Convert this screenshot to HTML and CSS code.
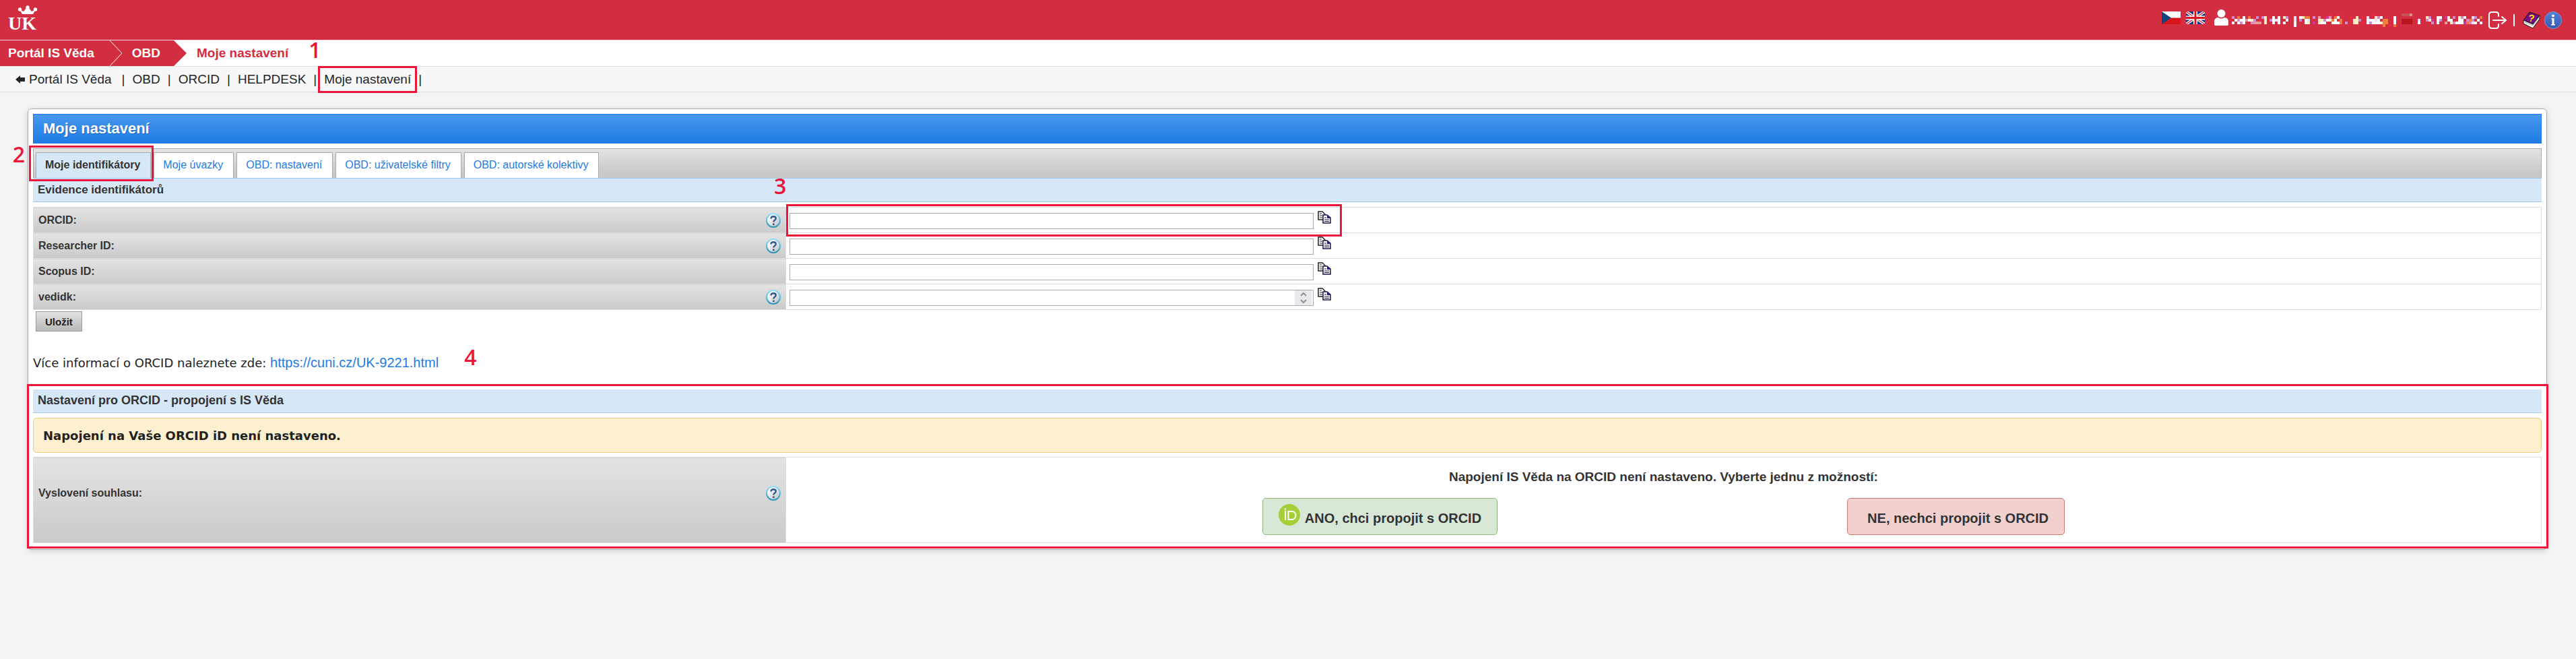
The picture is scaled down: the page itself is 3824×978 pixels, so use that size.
FILE: index.html
```
<!DOCTYPE html>
<html lang="cs">
<head>
    <meta charset="UTF-8">
    <meta name="viewport" content="width=device-width, initial-scale=1.0">
    <title>Moje nastavení - IS Věda</title>
    <link rel="stylesheet" href="styles.css">
</head>
<body>

    <!-- shared icons -->
    <svg class="sprite" width="0" height="0">
        <defs>
            <linearGradient id="helpFill" x1="0" y1="0" x2="1" y2="1">
                <stop offset="0.2" stop-color="#ffffff"/>
                <stop offset="1" stop-color="#b9bcc0"/>
            </linearGradient>
            <linearGradient id="helpRing" x1="0" y1="0" x2="0" y2="1">
                <stop offset="0" stop-color="#8fe0fa"/>
                <stop offset="1" stop-color="#2b94b8"/>
            </linearGradient>
            <linearGradient id="infoFill" x1="0" y1="0" x2="0" y2="1">
                <stop offset="0" stop-color="#5580d2"/>
                <stop offset="1" stop-color="#3458b4"/>
            </linearGradient>
        </defs>
        <symbol id="help" viewBox="0 0 22 22">
            <circle cx="11" cy="11" r="10" fill="url(#helpFill)" stroke="url(#helpRing)" stroke-width="2"/>
            <path d="M7.500 8.600c0-4.600 7.200-4.200 7.200-.4 0 2.400-3.400 2.500-3.400 5.300" fill="none" stroke="#34598c" stroke-width="2.400"/>
            <rect x="10" y="15.500" width="2.600" height="2.600" fill="#34598c"/>
        </symbol>
        <symbol id="copy" viewBox="0 0 20 19">
            <path d="M1 1h6l4 4v8H1z" fill="#fff" stroke="#222" stroke-width="1.500"/>
            <path d="M3 4h3M3 7h4M3 10h4" stroke="#222" stroke-width="1.200"/>
            <path d="M8 6h6l5 4v8H8z" fill="#fff" stroke="#1d1448" stroke-width="1.500"/>
            <path d="M14 6l5 5h-5z" fill="#2b1a78"/>
            <path d="M10 10h3M10 13h7M10 15.500h7" stroke="#1d1448" stroke-width="1.200"/>
        </symbol>
    </svg>

    <header class="topbar">
        <a href="#" class="logo" aria-label="Univerzita Karlova">
            <svg width="48" height="42" viewBox="0 0 48 42">
                <circle cx="17.500" cy="7" r="2.700" fill="#fff"/>
                <circle cx="40.500" cy="7" r="2.700" fill="#fff"/>
                <circle cx="29" cy="4" r="2.700" fill="#fff"/>
                <path d="M17 7l4 7h16l4-7-6 3-4-5h-4l-4 5z" fill="#fff"/>
                <text x="0" y="37" class="logo-text">UK</text>
            </svg>
        </a>
        <div class="user-tools">
            <a href="#" class="flag" aria-label="Čeština">
                <svg width="28" height="19" viewBox="0 0 28 19">
                    <path d="M0 0h28v10H0z" fill="#fff"/>
                    <path d="M0 9.500h28V19H0z" fill="#d7141a"/>
                    <path d="M0 0l14 9.500L0 19z" fill="#11457e"/>
                </svg>
            </a>
            <a href="#" class="flag" aria-label="English">
                <svg width="28" height="19" viewBox="0 0 28 19">
                    <path d="M0 0h28v19H0z" fill="#15318b"/>
                    <path d="M0 0l28 19M28 0L0 19" stroke="#fff" stroke-width="4"/>
                    <path d="M0 0l28 19M28 0L0 19" stroke="#d7141a" stroke-width="1.200"/>
                    <path d="M14 0v19M0 9.500h28" stroke="#fff" stroke-width="6"/>
                    <path d="M14 0v19M0 9.500h28" stroke="#d7141a" stroke-width="3"/>
                </svg>
            </a>
            <svg class="person" width="21" height="24" viewBox="0 0 21 24">
                <ellipse cx="10.500" cy="6" rx="6" ry="6" fill="#fff"/>
                <path d="M0 22v-4c0-4 3-6 6-6 3 2 6 2 9 0 3 0 6 2 6 6v4c0 1-1 2-2 2H2c-1 0-2-1-2-2z" fill="#fff"/>
            </svg>
            <!-- anonymised user name -->
            <svg class="user-name" width="372" height="28" viewBox="0 0 93 7" shape-rendering="crispEdges">
                <path stroke="#fff" d="M4 2.500h1M15 2.500h1M17 2.500h1M25 2.500h1M55 2.500h1M60 2.500h1M76 2.500h2M39 2.500h1M86 2.500h1M1 3.500h1M3 3.500h2M6 3.500h2M15 3.500h1M17 3.500h1M20 3.500h1M27 3.500h1M35 3.500h1M38 3.500h1M50 3.500h3M54 3.500h1M60 3.500h1M76 3.500h1M80 3.500h2M84 3.500h2M91 3.500h1M0 4.500h1M2 4.500h1M4 4.500h1M15 4.500h1M17 4.500h1M19 4.500h1M23 4.500h1M27 4.500h1M33 4.500h2M37 4.500h3M50 4.500h1M52 4.500h3M60 4.500h1M69 4.500h1M76 4.500h1M83 4.500h3M90 4.500h1M92 4.500h1M23 5.500h1"/>
                <path stroke="#fdecc3" d="M12 2.500h1M19 2.500h1M26 2.500h1M46 2.500h1M53 2.500h1M72 2.500h1M80 2.500h1M84 2.500h1M7 3.500h1M12 3.500h1M32 3.500h2M36 3.500h1M45 3.500h2M73 3.500h1M12 4.500h1M28 4.500h1M32 4.500h1M45 4.500h2M55 4.500h1M81 4.500h1"/>
                <path stroke="#d08bd0" d="M0 2.500h1M9 2.500h1M11 2.500h1M30 2.500h1M20 2.500h1M54 2.500h1M73 2.500h1M82 2.500h1M85 2.500h1M90 2.500h1M2 3.500h1M8 3.500h1M14 3.500h1M25 3.500h1M34 3.500h1M47 3.500h1M72 3.500h1M77 3.500h1M87 3.500h1M89 3.500h1M3 4.500h1M7 4.500h1M42 4.500h1M51 4.500h1M74 4.500h1M82 4.500h1M88 4.500h1"/>
                <path stroke="#eee0fa" d="M23 2.500h1M50 2.500h1M89 2.500h1M16 3.500h1M23 3.500h1M28 3.500h1M53 3.500h1M69 3.500h1M89 4.500h1"/>
                <path stroke="#f27e3e" d="M2 2.500h1M6 2.500h1M28 2.500h1M27 2.500h1M38 2.500h1M92 2.500h1M37 3.500h1M40 3.500h1M56 3.500h2M88 3.500h1M40 4.500h1M56 4.500h2M87 4.500h1M56 5.500h1M60 5.500h1"/>
                <path stroke="#cf35a0" d="M30 4.500h1M35 2.500h1M74 3.500h1M79 2.500h1M86 4.500h1"/>
                <path stroke="#ea9aa0" d="M8 4.500h3M32 2.500h1M36 2.500h1M79 4.500h1M5 3.500h1"/>
                <path stroke="#e62a42" d="M36 1.500h1M39 1.500h1M44 2.500h1M44 3.500h1M44 4.500h1M48 2.500h1M48 4.500h1M52 1.500h1M55 5.500h1M58 5.500h1"/>
                <path stroke="#b8141e" d="M63 3.500h4M63 4.500h4"/>
                <path stroke="#c65550" d="M63 1.500h3"/>
                <path stroke="#e28a88" d="M66 1.500h1"/>
            </svg>
            <a href="#" class="logout" aria-label="Odhlásit">
                <svg width="27" height="26" viewBox="0 0 27 26" fill="none" stroke="#fff" stroke-width="2" stroke-linecap="round" stroke-linejoin="round">
                    <path d="M15 7V5c0-3-1-4-4-4H5C2 1 1 2 1 5v16c0 3 1 4 4 4h6c3 0 4-1 4-4v-2"/>
                    <path d="M7 13h18M20 8l6 5-6 5"/>
                </svg>
            </a>
            <span class="tool-sep"></span>
            <a href="#" class="manual" aria-label="Nápověda">
                <svg width="26" height="26" viewBox="0 0 26 26">
                    <path d="M10 1l15 5-10 13L1 13z" fill="#7a0a86" stroke="#111" stroke-width="1"/>
                    <path d="M1 13l14 6 10-13v5L15 25 1 18z" fill="#fff" stroke="#111" stroke-width="1"/>
                    <path d="M3 16l12 5 9-12" fill="none" stroke="#999" stroke-width="1"/>
                    <path d="M10 7.500c2-3 7-2 6 1-1 2-3 1-3.500 3.500" fill="none" stroke="#ffe600" stroke-width="2"/>
                    <path d="M11 13h2v2h-2z" fill="#ffe600"/>
                </svg>
            </a>
            <a href="#" class="info" aria-label="Informace">
                <svg width="26" height="26" viewBox="0 0 26 26">
                    <circle cx="13" cy="13" r="12.500" fill="url(#infoFill)" stroke="#7797d8"/>
                    <circle cx="13" cy="6.500" r="2" fill="#fff"/>
                    <path d="M10.500 10h4v9h1.500v1.500h-6V19h1.500v-7.500h-1z" fill="#fff"/>
                </svg>
            </a>
        </div>
    </header>

    <nav class="breadcrumb" aria-label="Drobečková navigace">
        <a href="#" class="crumb">Portál IS Věda</a>
        <svg class="crumb-chevron" width="20" height="38" viewBox="0 0 20 38">
            <path d="M1 0l18 19L1 38" fill="none" stroke="#fff"/>
        </svg>
        <a href="#" class="crumb crumb-last">OBD</a>
        <svg class="crumb-end" width="20" height="38" viewBox="0 0 20 38">
            <path d="M0 0l19 19L0 38z" fill="#d22d40"/>
        </svg>
        <span class="crumb-current">Moje nastavení<span class="step step-1">1</span></span>
    </nav>

    <nav class="menu">
        <a href="#" class="menu-back">
            <svg width="14" height="12" viewBox="0 0 14 12"><path d="M0 6l7-6v3h7v6H7v3z" fill="#212529"/></svg>
            Portál IS Věda</a>
        <span class="menu-sep first">|</span>
        <a href="#">OBD</a>
        <span class="menu-sep">|</span>
        <a href="#">ORCID</a>
        <span class="menu-sep">|</span>
        <a href="#">HELPDESK</a>
        <span class="menu-sep">|</span>
        <a href="#" class="marked">Moje nastavení</a>
        <span class="menu-sep">|</span>
    </nav>

    <main class="panel">
        <h1>Moje nastavení</h1>

        <div class="tabs">
            <a href="#" class="tab active">Moje identifikátory<span class="step step-2">2</span></a>
            <a href="#" class="tab">Moje úvazky</a>
            <a href="#" class="tab">OBD: nastavení</a>
            <a href="#" class="tab">OBD: uživatelské filtry</a>
            <a href="#" class="tab">OBD: autorské kolektivy</a>
        </div>

        <form>
            <h2 class="section-title tabs-title">Evidence identifikátorů</h2>
            <table class="form-table">
                <tr>
                    <th scope="row"><div class="label-cell"><label for="orcid">ORCID:</label><svg width="22" height="22"><use href="#help"/></svg></div></th>
                    <td class="marked-cell">
                        <div class="field"><input type="text" id="orcid"><svg width="20" height="19"><use href="#copy"/></svg></div>
                        <span class="field-mark"><span class="step step-3">3</span></span>
                    </td>
                </tr>
                <tr>
                    <th scope="row"><div class="label-cell"><label for="researcher">Researcher ID:</label><svg width="22" height="22"><use href="#help"/></svg></div></th>
                    <td><div class="field"><input type="text" id="researcher"><svg width="20" height="19"><use href="#copy"/></svg></div></td>
                </tr>
                <tr>
                    <th scope="row"><div class="label-cell"><label for="scopus">Scopus ID:</label></div></th>
                    <td><div class="field"><input type="text" id="scopus"><svg width="20" height="19"><use href="#copy"/></svg></div></td>
                </tr>
                <tr>
                    <th scope="row"><div class="label-cell"><label for="vedidk">vedidk:</label><svg width="22" height="22"><use href="#help"/></svg></div></th>
                    <td>
                        <div class="field">
                            <div class="number-field">
                                <input type="number" id="vedidk">
                                <svg class="spinner" width="25" height="22" viewBox="0 0 25 22" fill="none" stroke="#8f8f9d" stroke-width="2">
                                    <path d="M9 8l4-4 4 4M9 14l4 4 4-4"/>
                                </svg>
                            </div>
                            <svg width="20" height="19"><use href="#copy"/></svg>
                        </div>
                    </td>
                </tr>
            </table>
            <button type="submit" class="btn-save">Uložit</button>
        </form>

        <p class="more-info">Více informací o ORCID naleznete zde: <a href="https://cuni.cz/UK-9221.html">https://cuni.cz/UK-9221.html</a><span class="step step-4">4</span></p>

        <section class="orcid-section">
            <h2 class="section-title">Nastavení pro ORCID - propojení s IS Věda</h2>
            <div class="warning">Napojení na Vaše ORCID iD není nastaveno.</div>
            <table class="form-table consent-table">
                <tr>
                    <th scope="row"><div class="label-cell">Vyslovení souhlasu:<svg width="22" height="22"><use href="#help"/></svg></div></th>
                    <td>
                        <p class="consent-text">Napojení IS Věda na ORCID není nastaveno. Vyberte jednu z možností:</p>
                        <div class="consent-buttons">
                            <button type="button" class="btn-yes">
                                <svg width="32" height="32" viewBox="0 0 32 32">
                                    <circle cx="16" cy="16" r="16" fill="#a6ce39"/>
                                    <circle cx="10" cy="7.500" r="1.300" fill="#fff"/>
                                    <path d="M10 10v14M14.500 11v12h5c8 0 8-12 0-12z" fill="none" stroke="#fff" stroke-width="2"/>
                                </svg>
                                <span>ANO, chci propojit s ORCID</span>
                            </button>
                            <button type="button" class="btn-no"><span>NE, nechci propojit s ORCID</span></button>
                        </div>
                    </td>
                </tr>
            </table>
        </section>
    </main>

</body>
</html>
```
FILE: styles.css
```
* {
    box-sizing: border-box;
}
body {
    margin: 0;
    background-color: #f4f4f4;
    font-family: Arial, "Liberation Sans", sans-serif;
    font-size: 16px;
    color: #333;
}
a {
    text-decoration: none;
}
svg {
    display: block;
    flex: none;
}
.sprite {
    position: absolute;
}

/* header */
.topbar {
    display: flex;
    justify-content: space-between;
    align-items: center;
    height: 60px;
    padding: 0 21px 0 12px;
    background-color: #d22d40;
    border-bottom: 1px solid #f3d3d7;
}
.logo {
    margin-bottom: 4px;
}
.logo-text {
    font-family: "Liberation Serif", serif;
    font-size: 28px;
    font-weight: bold;
    fill: #fff;
}
.user-tools {
    display: flex;
    align-items: center;
}
.flag {
    margin: 0 8px 6px 0;
}
.person {
    margin: 0 5px 8px 6px;
}
.logout {
    margin: 0 10px 0 9px;
}
.tool-sep {
    width: 2px;
    height: 18px;
    margin-right: 12px;
    background-color: #fff;
}
.manual {
    margin-right: 6px;
}

/* breadcrumb */
.breadcrumb {
    display: flex;
    align-items: stretch;
    height: 39px;
    background-color: #fff;
    border-bottom: 1px solid #ddd;
    font-size: 19px;
    font-weight: bold;
    line-height: 37px;
}
.crumb {
    padding: 0 22px 0 12px;
    background-color: #d22d40;
    color: #fff;
}
.crumb-chevron {
    background-color: #d22d40;
}
.crumb-last {
    padding: 0 20px 0 14px;
}
.crumb-current {
    position: relative;
    padding-left: 14px;
    color: #d22d40;
}

/* menu */
.menu {
    display: flex;
    align-items: center;
    height: 38px;
    padding-left: 23px;
    background-color: #f8f8f8;
    border-bottom: 1px solid #ddd;
    font-size: 19px;
    line-height: 36px;
}
.menu a {
    color: #212529;
}
.menu-back {
    display: flex;
    align-items: center;
    gap: 6px;
}
.menu-sep {
    width: 27px;
    text-align: center;
    color: #212529;
}
.menu-sep.first {
    margin-left: 4px;
}
.menu .marked {
    position: relative;
}
.marked::after {
    content: "";
    position: absolute;
    inset: -2px -9px;
    border: 3px solid #eb1639;
}

/* numbered steps */
.step {
    position: absolute;
    font-family: "Open Sans", "Noto Sans", sans-serif;
    font-size: 32px;
    font-weight: 600;
    line-height: 32px;
    color: #eb1639;
}
.step-1 {
    left: 100%;
    top: -2px;
    margin-left: 30px;
}
.step-2 {
    right: 100%;
    top: -14px;
    margin-right: 17px;
}
.step-3 {
    left: -21px;
    top: -46px;
}
.step-4 {
    left: 100%;
    top: -12px;
    margin-left: 38px;
}

/* panel */
.panel {
    margin: 24px 43px 32px 41px;
    padding: 7px 7px 9px;
    background-color: #fff;
    border: 1px solid #aaa;
    border-radius: 6px;
    box-shadow: 0 2px 8px rgba(0, 0, 0, 0.15);
}
.panel h1 {
    margin: 0 0 7px;
    height: 44px;
    padding-left: 14px;
    background: linear-gradient(#4898ee, #1f7be5);
    border: 1px solid #1f7be5;
    color: #fff;
    font-size: 22px;
    line-height: 42px;
    text-shadow: 1px 1px 0 #1464c8;
}

/* tabs */
.tabs {
    display: flex;
    align-items: flex-end;
    gap: 4px;
    height: 44px;
    padding: 0 3px;
    background: linear-gradient(#e3e3e3, #c9c9c9 80%);
    border: 1px solid #aaa;
    border-bottom: none;
}
.tab {
    height: 38px;
    padding: 0 15px 0 13px;
    background-color: #fff;
    border: 1px solid #aaa;
    border-bottom: none;
    color: #1f7be5;
    line-height: 36px;
}
.tab.active {
    position: relative;
    background-color: #d6e8f8;
    color: #333;
    font-weight: bold;
}
.tab.active::after {
    content: "";
    position: absolute;
    inset: -11px -5px -5px -11px;
    border: 3px solid #eb1639;
    z-index: 1;
}
.section-title {
    margin: 0 0 7px;
    height: 35px;
    padding-left: 7px;
    background-color: #d6e8f8;
    border-bottom: 1px solid #a4c8ec;
    font-size: 18px;
    line-height: 33px;
}
.tabs-title {
    height: 36px;
    border-top: 1px solid #a4c8ec;
    font-size: 17px;
}

/* form */
.form-table {
    width: 100%;
    border-collapse: collapse;
    table-layout: fixed;
}
.form-table th,
.form-table td {
    border: 1px solid #ddd;
}
.form-table th {
    width: 30%;
    padding: 0 7px;
    background: linear-gradient(#e3e3e3, #cacaca);
    text-align: left;
}
.form-table td {
    padding: 5px;
}
.label-cell {
    display: flex;
    justify-content: space-between;
    align-items: center;
}
.field {
    display: flex;
    align-items: flex-start;
    gap: 6px;
}
.field input {
    display: block;
    width: 30%;
    height: 24px;
    margin: 3px 0 0;
    border: 1px solid #aaa;
    background-color: #fff;
}
.number-field {
    position: relative;
    width: 30%;
}
.number-field input {
    width: 100%;
    appearance: textfield;
}
.spinner {
    position: absolute;
    top: 4px;
    right: 3px;
    background-color: #e9e9ed;
}
.marked-cell {
    position: relative;
}
.field-mark {
    position: absolute;
    top: -5px;
    left: 0;
    width: calc(30% + 44px);
    height: 48px;
    border: 3px solid #eb1639;
    pointer-events: none;
}
.btn-save {
    display: block;
    height: 30px;
    margin: 2px 0 0 4px;
    padding: 0 13px;
    background: linear-gradient(#e3e3e3, #b8b8b8);
    border: 1px solid #999;
    color: #222;
    font-family: inherit;
    font-size: 15px;
    font-weight: bold;
}
.more-info {
    position: relative;
    width: fit-content;
    margin: 34px 0 27px;
    color: #222;
    font-family: Verdana, "DejaVu Sans", sans-serif;
    font-size: 18px;
    line-height: 24px;
}
.more-info a {
    color: #1f7be5;
    font-family: Arial, "Liberation Sans", sans-serif;
    font-size: 20px;
}

/* ORCID section */
.orcid-section {
    position: relative;
}
.orcid-section::after {
    content: "";
    position: absolute;
    inset: -8px -10px -8px -9px;
    border: 3px solid #eb1639;
    pointer-events: none;
}
.warning {
    height: 52px;
    margin-bottom: 6px;
    padding-left: 14px;
    background-color: #fdf0ce;
    border: 1px solid #e8cd85;
    border-radius: 5px;
    color: #222;
    font-family: Verdana, "DejaVu Sans", sans-serif;
    font-size: 18px;
    font-weight: bold;
    line-height: 52px;
}
.consent-table th {
    padding-bottom: 20px;
}
.consent-table td {
    padding: 18px 5px 11px;
}
.consent-text {
    margin: 0;
    font-size: 19px;
    font-weight: bold;
    line-height: 22px;
    text-align: center;
}
.consent-buttons {
    display: flex;
    justify-content: center;
    gap: 20%;
    margin-top: 20px;
}
.consent-buttons button {
    display: flex;
    align-items: center;
    gap: 7px;
    height: 55px;
    padding: 0 23px;
    border: 1px solid #8fb878;
    border-radius: 5px;
    background-color: #d9e7d7;
    color: #333;
    font-family: inherit;
    font-size: 20px;
    font-weight: bold;
}
.consent-buttons span {
    padding-top: 5px;
}
.consent-buttons svg {
    margin-bottom: 6px;
}
.consent-buttons .btn-no {
    padding: 0 23px 0 29px;
    background-color: #f2d0ce;
    border-color: #c67a76;
}
```
